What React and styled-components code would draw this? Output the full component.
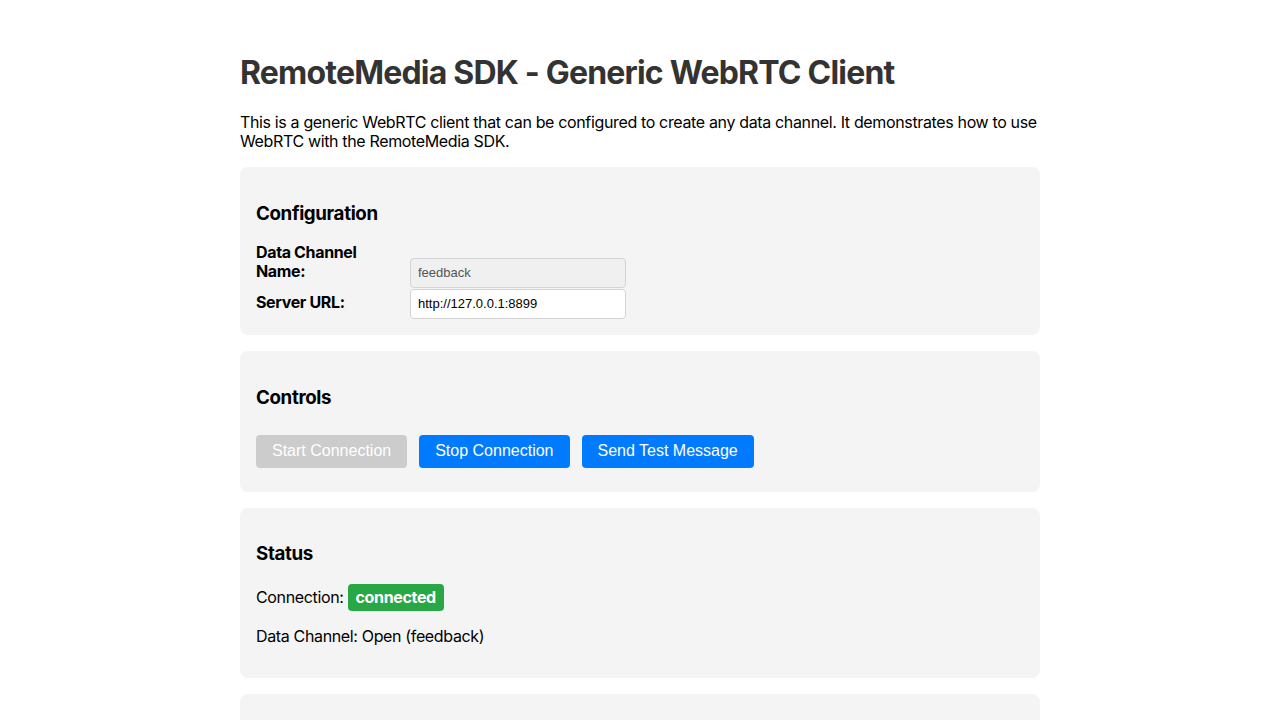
import React from "react";
import styled, { createGlobalStyle } from "styled-components";

const GlobalStyle = createGlobalStyle`
  html, body {
    margin: 0;
    padding: 0;
    background: #ffffff;
  }
  body {
    font-family: Inter, "Noto Sans", "Liberation Sans", sans-serif;
    font-size: 16px;
    letter-spacing: -0.022em;
    color: #000000;
  }
`;

const Container = styled.div`
  max-width: 800px;
  margin: 0 auto;
  padding: 32px 0;
`;

const Title = styled.h1`
  font-size: 32px;
  font-weight: 700;
  letter-spacing: -0.025em;
  color: #333333;
  margin: 21.44px 0 20.44px;
`;

const Intro = styled.p`
  margin: 16px 0;
  line-height: 19px;
`;

const Card = styled.section`
  background: #f4f4f4;
  border-radius: 8px;
  padding: 16px;
  margin-bottom: 16px;
`;

const CardTitle = styled.h3`
  font-size: 18.72px;
  font-weight: 700;
  margin: 18.72px 0;
`;

const FormRow = styled.div`
  display: flex;
  align-items: last baseline;
  gap: 4px;
  margin-bottom: 1px;

  &:last-child {
    margin-bottom: 0;
  }
`;

const Label = styled.label`
  width: 150px;
  font-weight: 700;
  line-height: 19px;
`;

const Input = styled.input`
  width: 200px;
  padding: 6px 7px;
  border: 1px solid #d4d4d4;
  border-radius: 4px;
  font-family: "Liberation Sans", Arial, sans-serif;
  font-size: 13px;
  line-height: 16px;
  letter-spacing: 0;
  box-sizing: content-box;
  background: ${(p) => (p.disabled ? "#f0f0f0" : "#ffffff")};
  color: ${(p) => (p.disabled ? "#555555" : "#000000")};
  outline: none;
`;

const ButtonRow = styled.div`
  display: flex;
  gap: 12px;
  padding: 7px 0 8px;
`;

const Button = styled.button`
  height: 33px;
  padding: 0 16px;
  border: none;
  border-radius: 4px;
  font-family: "Liberation Sans", Arial, sans-serif;
  font-size: 16px;
  letter-spacing: 0;
  color: #ffffff;
  background: ${(p) => (p.disabled ? "#cccccc" : "#007bff")};
  cursor: ${(p) => (p.disabled ? "default" : "pointer")};
`;

const StatusLine = styled.p`
  margin: 16px 0;
  line-height: 19px;
  display: flex;
  align-items: center;
  gap: 4px;
`;

const Badge = styled.span`
  display: inline-block;
  padding: 4px 8px;
  border-radius: 4px;
  background: #28a745;
  color: #ffffff;
  font-weight: 700;
  line-height: 19px;
`;

export default function App() {
  return (
    <>
      <GlobalStyle />
      <Container>
        <Title>RemoteMedia SDK - Generic WebRTC Client</Title>
        <Intro>
          This is a generic WebRTC client that can be configured to create any data channel. It
          demonstrates how to use WebRTC with the RemoteMedia SDK.
        </Intro>

        <Card>
          <CardTitle>Configuration</CardTitle>
          <FormRow>
            <Label>Data Channel Name:</Label>
            <Input value="feedback" disabled readOnly />
          </FormRow>
          <FormRow>
            <Label>Server URL:</Label>
            <Input value="http://127.0.0.1:8899" readOnly />
          </FormRow>
        </Card>

        <Card>
          <CardTitle>Controls</CardTitle>
          <ButtonRow>
            <Button disabled>Start Connection</Button>
            <Button>Stop Connection</Button>
            <Button>Send Test Message</Button>
          </ButtonRow>
        </Card>

        <Card>
          <CardTitle>Status</CardTitle>
          <StatusLine>
            Connection: <Badge>connected</Badge>
          </StatusLine>
          <StatusLine>Data Channel: Open (feedback)</StatusLine>
        </Card>

        <Card>
          <CardTitle>Messages</CardTitle>
        </Card>
      </Container>
    </>
  );
}
